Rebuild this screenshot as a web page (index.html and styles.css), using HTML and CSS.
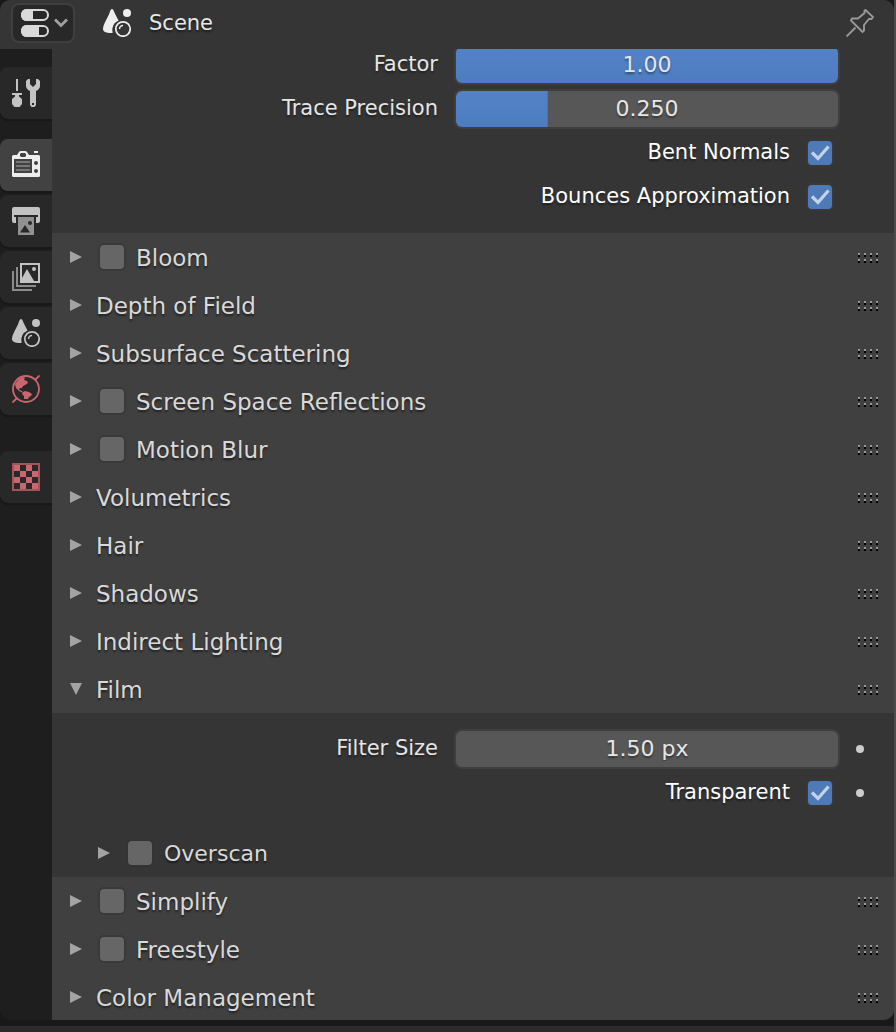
FILE: index.html
```html
<!DOCTYPE html>
<html lang="en">
<head>
    <meta charset="UTF-8">
    <meta name="viewport" content="width=device-width, initial-scale=1.0">
    <title>Scene Properties</title>
    <link rel="stylesheet" href="styles.css">
</head>
<body>
    <svg class="defs" aria-hidden="true">
        <symbol id="arrow-right" viewBox="0 0 12 12"><path d="M0 0L12 6L0 12Z" fill="currentColor"/></symbol>
        <symbol id="arrow-down" viewBox="0 0 12 12"><path d="M0 0H12L6 12Z" fill="currentColor"/></symbol>
        <symbol id="grip" viewBox="0 0 20 10">
            <path d="M0 1H20M0 7H20" stroke="#999" stroke-width="2" stroke-dasharray="2 4"/>
            <path d="M0 3H20M0 9H20" stroke="#000" stroke-width="2" stroke-dasharray="2 4"/>
        </symbol>
        <symbol id="scene" viewBox="0 0 28 28">
            <path d="M9 0C8 0 7.500 1 7 2.500C5 9 0 15 0 20C0 23 3.500 24.200 9.600 24A10.500 10.500 0 0 1 15.600 11.500C14 8.500 12 5 11 2.500C10.500 1 10 0 9 0Z" fill="currentColor"/>
            <circle cx="24" cy="4" r="4" fill="currentColor"/>
            <circle cx="20" cy="20" r="7.200" fill="none" stroke="currentColor" stroke-width="1.700"/>
            <path d="M16.500 20A3.500 3.500 0 0 1 20 16.500" fill="none" stroke="currentColor" stroke-width="1.500"/>
        </symbol>
    </svg>

    <div class="editor">
        <header class="header">
            <button class="editor-type" aria-label="Editor type: Properties">
                <svg width="28" height="28" viewBox="0 0 28 28">
                    <rect x="1" y="1" width="26" height="10" rx="5" fill="none" stroke="currentColor" stroke-width="2"/>
                    <path d="M12 0H5A5 6 0 0 0 5 12H12Z" fill="currentColor"/>
                    <rect x="1" y="17" width="26" height="10" rx="5" fill="none" stroke="currentColor" stroke-width="2"/>
                    <path d="M18 16H5A5 6 0 0 0 5 28H18Z" fill="currentColor"/>
                </svg>
                <svg class="chevron" width="14" height="10" viewBox="0 0 14 10"><path d="M1 1.500L7 7.500L13 1.500" fill="none" stroke="currentColor" stroke-width="2.800"/></svg>
            </button>
            <svg class="scene-icon" width="28" height="28"><use href="#scene"/></svg>
            <span class="context">Scene</span>
            <button class="pin" aria-label="Pin">
                <svg width="28" height="28" viewBox="0 0 28 28">
                    <path d="M19.500 1L27 8L25.500 10H23L18 16V21.500L16.500 23L5 11.500L6 9.500H12L18.500 4V1.800Z M9.500 18.500L0.500 27.500" fill="none" stroke="currentColor" stroke-width="1.900"/>
                </svg>
            </button>
        </header>

        <div class="content">
            <nav class="tabs">
                <button class="tab" aria-label="Tool">
                    <svg width="28" height="28" viewBox="0 0 28 28">
                        <path d="M4 0H6V12H4Z M0 14H10V16H7V17.500L10 20V25L7.500 28H2.500L0 25V20L3 17.500V16H0Z" fill="currentColor"/>
                        <path fill-rule="evenodd" d="M16 0H18V5L21 8L24 5V0H26L28 2V7C28 9.500 26 11 24 12V26L22.500 28H19.500L18 26V12C16 11 14 9.500 14 7V2Z M20 24V26H22V24Z" fill="currentColor"/>
                    </svg>
                </button>
                <button class="tab group-start active" aria-label="Render">
                    <svg width="28" height="28" viewBox="0 0 28 28">
                        <path fill-rule="evenodd" d="M22 0H26V2H22Z M5 4L7 1Q7.500 0 9 0H13Q14.500 0 15 1L17 4H26.500Q28 4 28 5.500V24.500Q28 26 26.500 26H1.500Q0 26 0 24.500V5.500Q0 4 1.500 4Z M9 2L8 3V5L9 6H13L14 5V3L13 2Z M2 8V22H20V8Z" fill="currentColor"/>
                        <path d="M4 11H18M4 15H18M4 19H18" stroke="#777" stroke-width="2"/>
                        <circle cx="24" cy="12" r="2" fill="#424242"/>
                        <circle cx="24" cy="20" r="2" fill="#424242"/>
                    </svg>
                </button>
                <button class="tab" aria-label="Output">
                    <svg width="28" height="28" viewBox="0 0 28 28">
                        <path d="M2 0H26Q28 0 28 2V14Q28 16 26 16H24V10H4V16H2Q0 16 0 14V2Q0 0 2 0Z" fill="currentColor"/>
                        <path d="M2 8H26V10H2Z" fill="#282828"/>
                        <path d="M6 10H22V28H6Z" fill="#919191"/>
                        <path d="M13 18L18 25.500H8Z" fill="#282828"/>
                        <circle cx="18" cy="16" r="2" fill="#282828"/>
                    </svg>
                </button>
                <button class="tab" aria-label="View Layer">
                    <svg width="28" height="28" viewBox="0 0 28 28">
                        <path d="M5 4V23H24M1 8V27H20" fill="none" stroke="#8c8c8c" stroke-width="2"/>
                        <rect x="9" y="1" width="18" height="18" fill="none" stroke="currentColor" stroke-width="2"/>
                        <path d="M15 6L22 18H10V15Z" fill="currentColor"/>
                        <circle cx="22" cy="6" r="2" fill="currentColor"/>
                    </svg>
                </button>
                <button class="tab" aria-label="Scene">
                    <svg width="28" height="28"><use href="#scene"/></svg>
                </button>
                <button class="tab pink" aria-label="World">
                    <svg width="28" height="28" viewBox="0 0 28 28">
                        <circle cx="14" cy="14" r="13" fill="none" stroke="currentColor" stroke-width="1.800"/>
                        <path d="M0.500 27.500L5 23M23 5L27.500 0.500" stroke="currentColor" stroke-width="1.800"/>
                        <path d="M3 9L7 4L11 2L13 3L12 5L15 6L16 8L13 10L11 11L10 13L8 13L7 15L10 16L11 18L7 16L4 13Z" fill="currentColor"/>
                        <path d="M11 17L13 16L17 17L20 19L19 21L17 22L16 24L12 24L12 21L10 19Z" fill="currentColor"/>
                    </svg>
                </button>
                <button class="tab group-end pink" aria-label="Texture">
                    <svg width="28" height="28" viewBox="0 0 28 28">
                        <rect x="1" y="1" width="26" height="26" fill="none" stroke="#a5535b" stroke-width="2"/>
                        <path d="M2 2H8V8H2Z M14 2H20V8H14Z M8 8H14V14H8Z M20 8H26V14H20Z M2 14H8V20H2Z M14 14H20V20H14Z M8 20H14V26H8Z M20 20H26V26H20Z" fill="currentColor"/>
                    </svg>
                </button>
            </nav>

            <main class="panels">
                <div class="panel-body scrolled">
                    <div class="row">
                        <label for="factor">Factor</label>
                        <input class="number" id="factor" type="text" value="1.00" style="--fill: 100%">
                    </div>
                    <div class="row">
                        <label for="precision">Trace Precision</label>
                        <input class="number" id="precision" type="text" value="0.250" style="--fill: 24%">
                    </div>
                    <div class="row check-row">
                        <label for="bent">Bent Normals</label>
                        <input class="check" id="bent" type="checkbox" checked>
                    </div>
                    <div class="row check-row">
                        <label for="bounces">Bounces Approximation</label>
                        <input class="check" id="bounces" type="checkbox" checked>
                    </div>
                </div>

                <section class="panel-header">
                    <button class="toggle" aria-label="Expand Bloom"><svg class="arrow"><use href="#arrow-right"/></svg></button>
                    <input class="check" id="bloom" type="checkbox">
                    <label class="title" for="bloom">Bloom</label>
                    <svg class="grip"><use href="#grip"/></svg>
                </section>
                <section class="panel-header">
                    <button class="toggle"><svg class="arrow"><use href="#arrow-right"/></svg><span class="title">Depth of Field</span></button>
                    <svg class="grip"><use href="#grip"/></svg>
                </section>
                <section class="panel-header">
                    <button class="toggle"><svg class="arrow"><use href="#arrow-right"/></svg><span class="title">Subsurface Scattering</span></button>
                    <svg class="grip"><use href="#grip"/></svg>
                </section>
                <section class="panel-header">
                    <button class="toggle" aria-label="Expand Screen Space Reflections"><svg class="arrow"><use href="#arrow-right"/></svg></button>
                    <input class="check" id="ssr" type="checkbox">
                    <label class="title" for="ssr">Screen Space Reflections</label>
                    <svg class="grip"><use href="#grip"/></svg>
                </section>
                <section class="panel-header">
                    <button class="toggle" aria-label="Expand Motion Blur"><svg class="arrow"><use href="#arrow-right"/></svg></button>
                    <input class="check" id="motion-blur" type="checkbox">
                    <label class="title" for="motion-blur">Motion Blur</label>
                    <svg class="grip"><use href="#grip"/></svg>
                </section>
                <section class="panel-header">
                    <button class="toggle"><svg class="arrow"><use href="#arrow-right"/></svg><span class="title">Volumetrics</span></button>
                    <svg class="grip"><use href="#grip"/></svg>
                </section>
                <section class="panel-header">
                    <button class="toggle"><svg class="arrow"><use href="#arrow-right"/></svg><span class="title">Hair</span></button>
                    <svg class="grip"><use href="#grip"/></svg>
                </section>
                <section class="panel-header">
                    <button class="toggle"><svg class="arrow"><use href="#arrow-right"/></svg><span class="title">Shadows</span></button>
                    <svg class="grip"><use href="#grip"/></svg>
                </section>
                <section class="panel-header">
                    <button class="toggle"><svg class="arrow"><use href="#arrow-right"/></svg><span class="title">Indirect Lighting</span></button>
                    <svg class="grip"><use href="#grip"/></svg>
                </section>
                <section class="panel-header">
                    <button class="toggle" aria-expanded="true"><svg class="arrow"><use href="#arrow-down"/></svg><span class="title">Film</span></button>
                    <svg class="grip"><use href="#grip"/></svg>
                </section>

                <div class="panel-body film">
                    <div class="row">
                        <label for="filter-size">Filter Size</label>
                        <input class="number" id="filter-size" type="text" value="1.50 px">
                        <button class="key" aria-label="Animate Filter Size"></button>
                    </div>
                    <div class="row check-row">
                        <label for="transparent">Transparent</label>
                        <input class="check" id="transparent" type="checkbox" checked>
                        <button class="key" aria-label="Animate Transparent"></button>
                    </div>
                    <section class="panel-header sub">
                        <button class="toggle" aria-label="Expand Overscan"><svg class="arrow"><use href="#arrow-right"/></svg></button>
                        <input class="check" id="overscan" type="checkbox">
                        <label for="overscan">Overscan</label>
                    </section>
                </div>

                <section class="panel-header">
                    <button class="toggle" aria-label="Expand Simplify"><svg class="arrow"><use href="#arrow-right"/></svg></button>
                    <input class="check" id="simplify" type="checkbox">
                    <label class="title" for="simplify">Simplify</label>
                    <svg class="grip"><use href="#grip"/></svg>
                </section>
                <section class="panel-header">
                    <button class="toggle" aria-label="Expand Freestyle"><svg class="arrow"><use href="#arrow-right"/></svg></button>
                    <input class="check" id="freestyle" type="checkbox">
                    <label class="title" for="freestyle">Freestyle</label>
                    <svg class="grip"><use href="#grip"/></svg>
                </section>
                <section class="panel-header">
                    <button class="toggle"><svg class="arrow"><use href="#arrow-right"/></svg><span class="title">Color Management</span></button>
                    <svg class="grip"><use href="#grip"/></svg>
                </section>
            </main>
        </div>
    </div>
    <footer class="status"></footer>
</body>
</html>
```
FILE: styles.css
```css
* {
    box-sizing: border-box;
}
body {
    margin: 0;
    height: 100vh;
    display: flex;
    flex-direction: column;
    background: #191919;
    border-right: 2px solid #4b4b4b;
    font-family: "DejaVu Sans", sans-serif;
    font-size: 21px;
    color: #e6e6e6;
    overflow: hidden;
}
button, input {
    margin: 0;
    padding: 0;
    border: 0;
    background: none;
    font: inherit;
    color: inherit;
}
svg {
    display: block;
    flex: none;
}
.defs {
    position: absolute;
    width: 0;
    height: 0;
}
.editor {
    flex: 1;
    min-height: 0;
    display: flex;
    flex-direction: column;
    margin-bottom: 6px;
    border-radius: 10px;
    overflow: hidden;
}

/* header */
.header {
    flex: none;
    height: 49px;
    display: flex;
    align-items: center;
    padding: 0 20px 4px 11px;
    background: #353535;
}
.editor-type {
    width: 64px;
    height: 40px;
    display: flex;
    align-items: center;
    gap: 5px;
    padding-left: 8px;
    background: #282828;
    border: 2px solid #3f3f3f;
    border-radius: 8px;
    color: #d9d9d9;
}
.chevron {
    color: #a0a0a0;
}
.scene-icon {
    margin-left: 28px;
    color: #eee;
}
.context {
    margin-left: 18px;
    text-shadow: 0 2px 2px rgba(0, 0, 0, 0.5);
}
.pin {
    margin-left: auto;
    color: #999;
}

.content {
    flex: 1;
    min-height: 0;
    display: flex;
}

/* tabs */
.tabs {
    flex: none;
    width: 52px;
    display: flex;
    flex-direction: column;
    gap: 4px;
    padding-top: 18px;
    background: #1e1e1e;
}
.tab {
    height: 52px;
    display: flex;
    align-items: center;
    justify-content: center;
    background: #282828;
    border-radius: 8px 0 0 8px;
    box-shadow: 0 2px 1px #181818;
    color: #c3c3c3;
}
.tab.active {
    background: #424242;
    color: #eee;
}
.tab.pink {
    color: #cb6670;
}
.group-start {
    margin-top: 16px;
}
.group-end {
    margin-top: 32px;
}

/* panels */
.panels {
    flex: 1;
    min-width: 0;
    overflow: hidden;
    background: #404040;
}
.panel-body {
    background: #353535;
}
.scrolled {
    margin-top: -6px;
    padding-bottom: 14px;
}
.film {
    padding-top: 14px;
}
.row {
    height: 44px;
    display: grid;
    grid-template-columns: 1fr 1fr 38px;
    column-gap: 18px;
    align-items: center;
    padding-left: 4px;
}
.row label {
    text-align: right;
    padding-bottom: 2px;
    text-shadow: 0 2px 2px rgba(0, 0, 0, 0.4);
}
.check-row {
    grid-template-columns: 1fr 24px 44px;
    color: #fff;
}
.check-row .key {
    margin-left: 6px;
}
.number {
    width: 100%;
    height: 36px;
    padding-bottom: 2px;
    font-size: 22px;
    text-align: center;
    border-radius: 6px;
    background: linear-gradient(#5482c6, #4d7dc0) 0 0 / var(--fill, 0%) 100% no-repeat #575757;
    box-shadow: 0 0 0 2px #3f3f3f;
    text-shadow: 0 2px 2px rgba(0, 0, 0, 0.4);
}
.key {
    width: 8px;
    height: 8px;
    border-radius: 50%;
    background: #ccc;
}
.check {
    appearance: none;
    flex: none;
    width: 24px;
    height: 24px;
    border-radius: 4px;
    background: #666;
    box-shadow: 0 0 0 2px #393939;
}
.check:checked {
    background: #4f7ab8 url("data:image/svg+xml,%3Csvg xmlns='http://www.w3.org/2000/svg' viewBox='0 0 24 24'%3E%3Cpath d='M4 11.500L10 17.500L20.500 5.500' fill='none' stroke='%23c5d3e8' stroke-width='3.200'/%3E%3C/svg%3E");
}

.panel-header {
    height: 48px;
    display: flex;
    align-items: center;
    padding: 0 16px 0 18px;
    font-size: 23px;
    color: #d9d9d9;
    text-shadow: 0 2px 2px rgba(0, 0, 0, 0.5);
}
.toggle {
    display: flex;
    align-items: center;
    gap: 14px;
    text-shadow: inherit;
}
.title {
    padding-top: 2px;
}
.arrow {
    width: 12px;
    height: 12px;
    color: #a3a3a3;
}
.panel-header .check {
    margin: 0 12px 0 18px;
}
.grip {
    width: 20px;
    height: 10px;
    margin-top: 2px;
    margin-left: auto;
}
.sub {
    margin-top: 14px;
    padding-left: 46px;
    font-size: 22px;
}
.sub .check {
    box-shadow: 0 1px 0 2px #333;
}

.status {
    flex: none;
    height: 6px;
    background: #2b2b2b;
}
```
